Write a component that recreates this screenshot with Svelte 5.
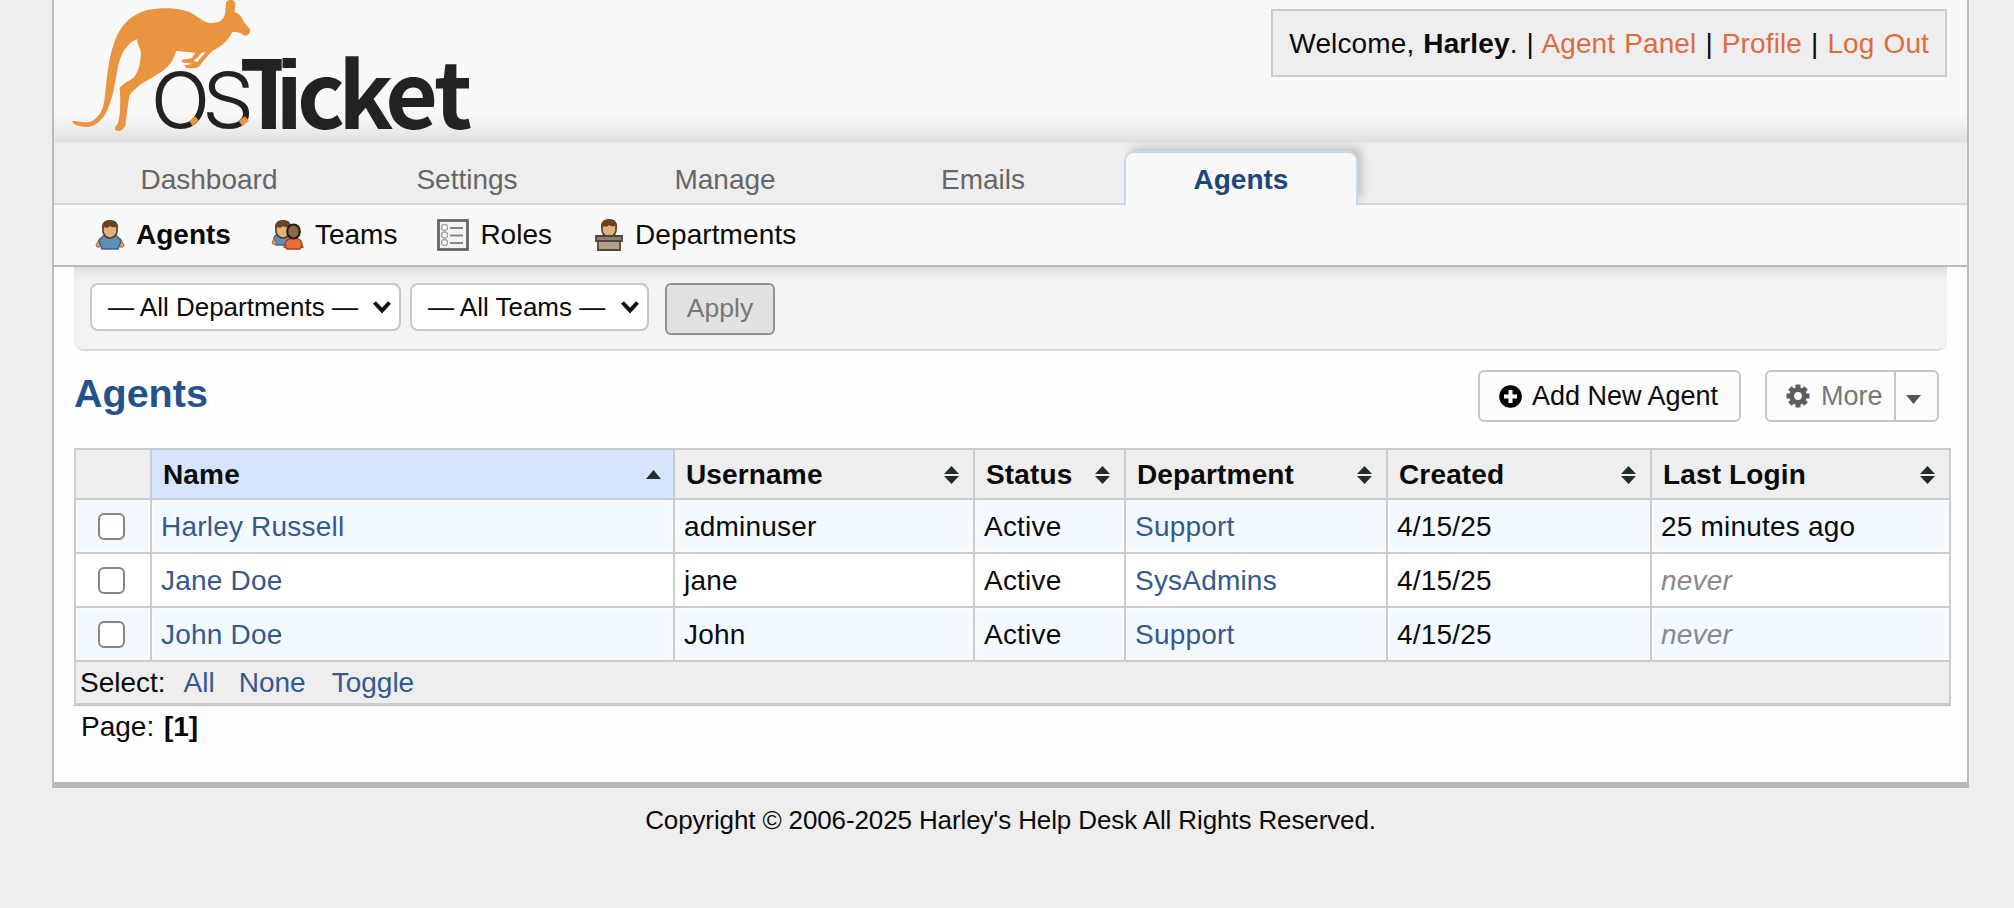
<script>
  const tabs = ['Dashboard', 'Settings', 'Manage', 'Emails', 'Agents'];
  const columns = ['Name', 'Username', 'Status', 'Department', 'Created', 'Last Login'];
  const agents = [
    { name: 'Harley Russell', user: 'adminuser', dept: 'Support', created: '4/15/25', login: '25 minutes ago' },
    { name: 'Jane Doe', user: 'jane', dept: 'SysAdmins', created: '4/15/25', login: null },
    { name: 'John Doe', user: 'John', dept: 'Support', created: '4/15/25', login: null }
  ];
</script>

{#snippet chevron()}
  <svg class="chevron" width="20" height="14" viewBox="0 0 20 14"><path d="M2.500 2.500 10 10.500 17.500 2.500" fill="none" stroke="#111" stroke-width="4" /></svg>
{/snippet}

{#snippet personHead(x, y)}
  <g transform="translate({x} {y})">
    <path d="M2 7Q2 1 9 1q7 0 7 6v5q-2 6-7 6T2 12Z" fill="#e3b27c" stroke="#5c3a1d" stroke-width="1.600" />
    <path d="M1 10V6Q2 0 9 0t8 6v4l-2-3q-4 1-6-1Q7 9 3 7Z" fill="#6b431f" />
  </g>
{/snippet}

<div class="page">
  <div class="container">
    <header>
      <svg class="logo" width="446" height="143" viewBox="42 0 1338 429" role="img" aria-label="osTicket">
        <path
          fill="#e9943f"
          d="M558 8C563-4 582-4 586 10L584 36C596 40 606 50 611 65L630 88C632 98 626 104 620 107C614 109 608 104 602 100C594 97 584 95 576 97C568 117 548 137 526 148C508 158 498 176 484 190C480 202 466 206 450 205C440 205 433 202 435 196L456 192C446 188 432 190 425 186C424 180 430 177 438 178L456 174L466 158L408 153C402 180 384 204 354 222C322 241 282 262 268 288L262 330L256 378C250 384 246 394 234 393C222 391 222 380 232 374C242 350 242 300 239 264C246 252 268 244 282 232C296 214 304 186 302 152C296 140 292 128 291 118C270 124 248 150 238 184C226 230 224 280 206 320C192 358 166 382 136 381C118 380 98 374 97 364C106 360 124 370 146 366C174 360 190 330 194 296C200 240 204 180 222 130C240 76 272 44 322 30C370 20 424 24 452 38C478 52 490 68 514 69C540 68 552 58 556 38Z"
        />
        <path fill="#f8f8f8" d="M484 159 498 155 472 186 460 183Q476 172 484 159Z" />
        <text class="logo-thin" x="333 485" y="384">os</text>
        <path fill="#e9943f" d="M448 364 466 349 477 362 457 377ZM597 364 614 349 627 362 606 377Z" />
        <text class="logo-bold" x="598" y="387">T</text>
        <path fill="#f8f8f8" d="M725 170h60v50h-60Z" />
        <text class="logo-bold lower" x="707 771 895 1036 1182" y="387"><tspan class="logo-i">i</tspan>cket</text>
      </svg>
      <p class="welcome">Welcome, <b>Harley</b>. | <a href="#panel">Agent Panel</a> | <a href="#profile">Profile</a> | <a href="#logout">Log Out</a></p>
    </header>

    <nav class="tabs">
      {#each tabs as tab}
        <a href="#{tab}" class:active={tab === 'Agents'}>{tab}</a>
      {/each}
    </nav>

    <nav class="subnav">
      <a class="current" href="#agents">
        <svg width="30" height="30" viewBox="0 0 30 30">
          <path d="M5 18 1 25q0 3 4 2l3-6ZM25 18l4 7q0 3-4 2l-3-6Z" fill="#e3a06a" stroke="#a8683a" />
          <path d="M4 21q4-7 11-7t11 7l-3 8H7Z" fill="#5d8fb8" stroke="#3d6486" stroke-width="1.400" />
          {@render personHead(6, 0)}
        </svg>
        Agents
      </a>
      <a class="teams" href="#teams">
        <svg width="32" height="30" viewBox="0 0 32 30">
          <path d="M2 18q2-5 9-5t9 6l-2 6H4Z" fill="#5d8fb8" stroke="#3d6486" stroke-width="1.400" />
          <path d="m2 18-2 5q1 2 4 1Z" fill="#e3a06a" stroke="#a8683a" />
          {@render personHead(2, 0)}
          <path d="m15 21-4 6q1 2 4 1ZM28 21l4 6q-1 2-4 1Z" fill="#b5622c" />
          <path d="M13 24q2-6 9-6t8 6l-2 5H15Z" fill="#e8703a" stroke="#a84316" stroke-width="1.400" />
          <ellipse cx="21.500" cy="11.500" rx="6.300" ry="7" fill="#8b6844" stroke="#222" stroke-width="2.200" />
        </svg>
        Teams
      </a>
      <a class="roles" href="#roles">
        <svg width="32" height="32" viewBox="0 0 32 32">
          <rect x="1.500" y="1.500" width="29" height="29" fill="#f4f4f4" stroke="#666" stroke-width="2.800" />
          <path d="M13 9h13M13 16.500h13M13 24h13" stroke="#858585" stroke-width="2.200" />
          <g fill="#fff" stroke="#a5a5a5" stroke-width="1.400"><circle cx="7.500" cy="8.500" r="3" /><circle cx="7.500" cy="16" r="3" /><circle cx="7.500" cy="23.500" r="3" /></g>
        </svg>
        Roles
      </a>
      <a class="depts" href="#departments">
        <svg width="28" height="32" viewBox="0 0 28 32">
          <path d="M5 18q2-4 9-4t9 4Z" fill="#4d89a8" />
          {@render personHead(5, 0)}
          <path d="M3 22h22v9H3Z" fill="#b5a188" stroke="#4d463c" stroke-width="1.800" />
          <path d="M1 17h26v5H1Z" fill="#8f826f" stroke="#4d463c" stroke-width="1.800" />
        </svg>
        Departments
      </a>
    </nav>

    <main>
      <form class="filters">
        <div class="select">— All Departments —{@render chevron()}</div>
        <div class="select team">— All Teams —{@render chevron()}</div>
        <button type="button">Apply</button>
      </form>

      <div class="heading">
        <h1>Agents</h1>
        <a class="btn add" href="#add">
          <svg width="23" height="23" viewBox="0 0 23 23"><circle cx="11.500" cy="11.500" r="11.300" /><path d="M11.500 5v13M5 11.500h13" stroke="#fff" stroke-width="4" /></svg>
          <span>Add New Agent</span>
        </a>
        <a class="btn more" href="#more">
          <svg width="24" height="24" viewBox="0 0 24 24">
            <g stroke="#5c5c5c" stroke-width="5"><path d="M12 .500v23M.500 12h23M3.900 3.900l16.200 16.200M3.900 20.100 20.100 3.900" /></g>
            <circle cx="12" cy="12" r="8.800" fill="#5c5c5c" /><circle cx="12" cy="12" r="3.900" fill="#fafafa" />
          </svg>
          <span>More</span>
          <i><svg width="15" height="9" viewBox="0 0 15 9"><path d="M0 0h15L7.500 9Z" fill="#555" /></svg></i>
        </a>
      </div>

      <table>
        <colgroup><col class="c0" /><col class="c1" /><col class="c2" /><col class="c3" /><col class="c4" /><col class="c5" /><col class="c6" /></colgroup>
        <thead>
          <tr>
            <th></th>
            {#each columns as column, i}
              <th class:sorted={i === 0}>
                <div>
                  <span>{column}</span>
                  {#if i === 0}
                    <svg width="15" height="9" viewBox="0 0 15 9"><path d="M7.500 0 15 9H0Z" fill="#222b2e" /></svg>
                  {:else}
                    <svg width="15" height="18" viewBox="0 0 15 18"><path d="M7.500 0 15 8H0ZM0 10h15l-7.500 8Z" fill="#222b2e" /></svg>
                  {/if}
                </div>
              </th>
            {/each}
          </tr>
        </thead>
        <tbody>
          {#each agents as agent}
            <tr>
              <td class="check"><input type="checkbox" aria-label={agent.name} /></td>
              <td><a href="#agent">{agent.name}</a></td>
              <td>{agent.user}</td>
              <td>Active</td>
              <td><a href="#dept">{agent.dept}</a></td>
              <td>{agent.created}</td>
              <td>{#if agent.login}{agent.login}{:else}<em>never</em>{/if}</td>
            </tr>
          {/each}
        </tbody>
        <tfoot>
          <tr>
            <td colspan="7"><div>Select:<a class="all" href="#all">All</a><a class="none" href="#none">None</a><a class="toggle" href="#toggle">Toggle</a></div></td>
          </tr>
        </tfoot>
      </table>
      <p class="pager">Page: <b>[1]</b></p>
    </main>
  </div>
  <footer>Copyright © 2006-2025 Harley's Help Desk All Rights Reserved.</footer>
</div>

<style>
  :global(body) { margin: 0; background: #eee; }
  .page { width: 2014px; height: 908px; overflow: hidden; background: #eee; color: #0a0a0a; font: 28px/36px "Liberation Sans", Arial, sans-serif; white-space: nowrap; }
  .page * { box-sizing: border-box; }
  a { color: #35598c; text-decoration: none; }
  p, h1 { margin: 0; }
  svg { display: block; flex: none; overflow: visible; }
  .container { width: 1917px; height: 788px; margin-left: 52px; background: #fefefe; border: 2px solid #bbb; border-top: 0; border-bottom: 6px solid #b9b9b9; }

  header { display: flex; justify-content: space-between; align-items: flex-start; height: 143px; padding-right: 20px; background: linear-gradient(#f8f8f8 114px, #ececec 130px, #e0e0e0 142px, #ececec 143px); }
  .logo-thin { font: 300 315px Roboto, sans-serif; fill: #222; }
  .logo-bold { font: 700 285px "Noto Sans CJK JP", sans-serif; fill: #222; }
  .logo-bold.lower { font-size: 273px; }
  .logo-i { font: 700 292px "Liberation Sans", sans-serif; }
  .welcome { height: 68px; margin-top: 9px; padding: 0 16px; border: 2px solid #ccc; background: #eee; line-height: 65px; letter-spacing: .12px; word-spacing: 1.1px; }
  .welcome a { color: #dc6c3f; }

  .tabs { display: flex; height: 62px; padding: 8px 0 0 38px; border-bottom: 2px solid #cbdaec; background: #eee; }
  .tabs a { width: 234px; height: 54px; margin-right: 24px; border: 2px solid transparent; border-bottom: 0; color: #666; line-height: 53px; text-align: center; }
  .tabs a.active { border-color: #c9d8eb; border-radius: 10px 10px 0 0; background: #f8f8f8; box-shadow: 5px -5px 10px -2px #bbb; color: #1b477c; font-weight: bold; clip-path: inset(-12px -20px 0 0); }

  .subnav { display: flex; height: 62px; padding-left: 41px; border-bottom: 2px solid #bbb; background: #f8f8f8; }
  .subnav a { display: flex; align-items: center; gap: 11px; color: #0a0a0a; }
  .subnav .current { font-weight: bold; }
  .subnav .teams { margin-left: 41px; }
  .subnav .roles { margin-left: 40px; }
  .subnav .depts { margin-left: 43px; gap: 12px; letter-spacing: .1px; }

  main { padding: 0 16px 0 20px; }
  .filters { display: flex; align-items: flex-start; width: 1873px; height: 84px; padding: 16px 0 0 16px; border-bottom: 2px dotted #d2d2d2; border-radius: 0 0 10px 10px; background: linear-gradient(#dedede, #ededed 8px, #f3f3f3 16px); }
  .select { display: flex; align-items: center; justify-content: space-between; width: 311px; height: 48px; margin-right: 9px; padding: 0 7px 0 16px; border: 2px solid #c8c8c8; border-radius: 8px; background: #fff; font-size: 26px; }
  .select.team { width: 239px; margin-right: 16px; }
  .filters button { width: 110px; height: 52px; padding: 0 0 3px; border: 2px solid #909090; border-radius: 6px; background: #e2e2e2; color: #777; font: inherit; font-size: 26.500px; }

  .heading { display: flex; height: 97px; padding-top: 19px; }
  h1 { flex: 1; color: #24528a; font-size: 39.500px; line-height: 46px; }
  .btn { display: flex; align-items: center; height: 52px; border: 2px solid #c6c6c6; border-radius: 6px; background: #fbfbfb; color: #0a0a0a; font-size: 27px; }
  .add { width: 263px; padding-left: 19px; gap: 10px; }
  .more { width: 174px; margin: 0 12px 0 24px; padding-left: 19px; gap: 11px; color: #777; }
  .more i { display: flex; align-items: center; width: 45px; height: 48px; margin-left: auto; padding: 6px 0 0 10px; border-left: 2px solid #c6c6c6; }

  table { width: 1877px; border-collapse: separate; border-spacing: 2px; border-bottom: 1px solid #bdbdbd; background: #ccc; table-layout: fixed; }
  .c0 { width: 74px; } .c1 { width: 521px; } .c2 { width: 298px; } .c3 { width: 149px; } .c4 { width: 260px; } .c5 { width: 262px; } .c6 { width: 297px; }
  th { height: 48px; padding: 1px 14px 0 11px; background: #eee; text-align: left; letter-spacing: .15px; }
  th.sorted { padding-right: 12px; background: #d5e5ff; }
  th div { display: flex; align-items: center; justify-content: space-between; }
  tbody td { height: 52px; padding: 1px 0 0 9px; background: #fff; letter-spacing: .2px; }
  tbody tr:nth-child(odd) td { background: #f2f9ff; box-shadow: inset 0 0 0 2px #f9fcff; }
  tbody td.check { padding-left: 22px; }
  input { display: block; appearance: none; width: 27px; height: 27px; margin: 0; border: 2px solid #858585; border-radius: 6px; background: #fff; }
  em { color: #8a8a8a; }
  tfoot td { height: 41px; padding: 0 4px; background: #eee; }
  tfoot div { display: flex; }
  .all { margin-left: 18px; } .none { margin-left: 24px; } .toggle { margin-left: 26px; }
  .pager { margin: 3px 0 0 7px; word-spacing: 2px; }
  footer { width: 1917px; margin-left: 52px; padding-top: 14px; font-size: 26px; letter-spacing: -.12px; text-align: center; }
</style>
